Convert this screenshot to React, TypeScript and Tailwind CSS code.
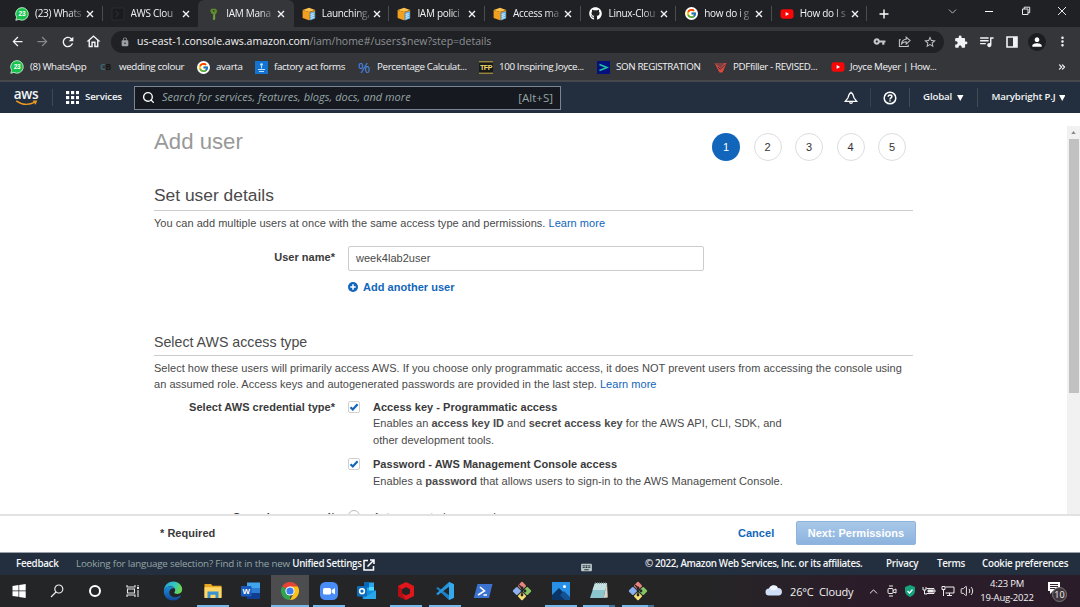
import React from "react";
import { FcGoogle } from "react-icons/fc";
import { FaGithub } from "react-icons/fa";
import {
  MdArrowBack, MdArrowForward, MdRefresh, MdOutlineHome, MdLock, MdVpnKey, MdStarBorder,
  MdExtension, MdQueueMusic, MdPerson, MdMoreVert, MdKeyboard,
} from "react-icons/md";
import { Search, ChevronUp, ChevronDown, Volume2, ChevronsRight } from "lucide-react";

const ui = "font-['Open_Sans','Noto_Sans',sans-serif]";

/* ---------- favicons ---------- */

const WhatsApp = () => (
  <svg viewBox="0 0 14 14" className="size-[14px] shrink-0">
    <path d="M7 .6a6.3 6.3 0 1 1-3.1 11.8L.8 13.3l.8-3A6.3 6.3 0 0 1 7 .6z" fill="#19c14e" stroke="#d9f5e0" strokeWidth=".8" />
    <text x="7" y="9.2" fontSize="6.5" fontWeight="700" textAnchor="middle" fill="#fff" fontFamily="Liberation Sans, sans-serif">23</text>
  </svg>
);

const Terminal = () => (
  <svg viewBox="0 0 14 14" className="size-[14px] shrink-0">
    <rect x="1" y="1" width="12" height="12" rx="1" fill="#1a1b1e" stroke="#2c2d31" />
    <path d="M4.5 4l3 3-3 3" stroke="#34373d" fill="none" />
  </svg>
);

const IamKey = () => (
  <svg viewBox="0 0 14 14" className="ml-[2px] size-[14px] shrink-0">
    <path d="M4.2 1.8h4.6L10.400 4 9.200 6.600l-1 .8V12l-1.3 1.2L5.600 12l.7-.9-.7-1 .6-.8V7.400l-1.700-.9L3.200 4z" fill="#5c8a2d" />
    <path d="M7.2 7.500V12l-.5 1" stroke="#91bc55" strokeWidth=".8" fill="none" />
    <circle cx="6.700" cy="3.800" r=".9" fill="#2c3a1f" />
  </svg>
);

const AwsCube = () => (
  <svg viewBox="0 0 14 14" className="size-[14px] shrink-0">
    <path d="M.6 3L7 .8 13.2 3 7 5z" fill="#ffc24a" />
    <path d="M.6 3L7 5v8.3L.6 11z" fill="#f2a01f" />
    <path d="M7 5l6.2-2v8L7 13.3z" fill="#d9820f" />
    <path d="M7.800 5.800l5.200-1.600v7.400l-5.200 2z" fill="#5aaee8" />
    <path d="M8.800 7.500l3-.9M8.800 9.400l3-.9M8.800 11.400l3-.9" stroke="#e8f6ff" strokeWidth="1" />
  </svg>
);

const YouTube = () => (
  <svg viewBox="0 0 14 10" className="h-[10px] w-[14px] shrink-0">
    <rect x=".5" y=".3" width="13" height="9.400" rx="2.400" fill="#f90606" />
    <path d="M5.600 3l3.500 2-3.500 2z" fill="#fff" />
  </svg>
);

const Google = () => (
  <span className="flex size-[13px] shrink-0 items-center justify-center rounded-full bg-white">
    <FcGoogle className="size-[11px]" />
  </span>
);
const GitHub = () => <FaGithub className="size-[13px] shrink-0 text-white" />;

/* ---------- browser chrome ---------- */

const tabs = [
  { icon: <WhatsApp />, title: "(23) Whats" },
  { icon: <Terminal />, title: "AWS Clou" },
  { icon: <IamKey />, title: "IAM Mana", active: true },
  { icon: <AwsCube />, title: "Launching," },
  { icon: <AwsCube />, title: "IAM polici" },
  { icon: <AwsCube />, title: "Access ma" },
  { icon: <GitHub />, title: "Linux-Clou" },
  { icon: <Google />, title: "how do i g" },
  { icon: <YouTube />, title: "How do I s" },
];

function TabStrip() {
  return (
    <div className="flex h-[27px] shrink-0 bg-[#202124] pl-[7px] text-[#f1f3f4]">
      {tabs.map((t, i) => (
        <div
          key={i}
          className={
            "flex h-[27px] w-[95.6px] shrink-0 items-center pl-2 " +
            (t.active ? "rounded-t-[6px] bg-[#35363a]" : "")
          }
        >
          <span className="flex w-[14px] justify-center">{t.icon}</span>
          <span className="ml-[6px] w-[48px] shrink-0 text-[10px] tracking-[-0.3px] whitespace-nowrap [mask-image:linear-gradient(to_right,#000_70%,#0005_92%)]">
            {t.title}
          </span>
          <svg viewBox="0 0 8 8" className="ml-[3px] size-[8px] shrink-0" fill="none" stroke="#f1f3f4" strokeWidth="1.400">
            <path d="M1 1l6 6M7 1L1 7" />
          </svg>
          {!t.active && i !== 1 && <span className="ml-auto h-[15px] w-px bg-[#4a4c50]" />}
        </div>
      ))}
      <div className="flex flex-1 items-center">
        <svg viewBox="0 0 10 10" className="ml-[12px] size-[10px] shrink-0" stroke="#fff" strokeWidth="1.400"><path d="M5 .5v9M.5 5h9" /></svg>
        <ChevronDown className="mb-1 ml-[57px] size-[13px] shrink-0 text-[#b5b7bb]" strokeWidth={1.800} />
        <span className="mb-1 ml-[26px] h-px w-[8px] shrink-0 bg-white" />
        <svg viewBox="0 0 10 10" className="mb-[5px] ml-[28px] size-[10px] shrink-0" fill="none" stroke="#e8eaed">
          <path d="M1.500 3h5.500v5.500H1.500zM3.200 3V1.200h5.500v5.500H7" />
        </svg>
        <svg viewBox="0 0 10 10" className="mb-[5px] ml-[26px] size-[10px] shrink-0" fill="none" stroke="#e8eaed">
          <path d="M1 1l8 8M9 1L1 9" />
        </svg>
      </div>
    </div>
  );
}

function Toolbar() {
  return (
    <div className="flex h-[28px] shrink-0 items-center bg-[#35363a] pt-px text-[#f1f3f4]">
      <MdArrowBack className="ml-[10px] size-[15px]" />
      <MdArrowForward className="ml-[10px] size-[15px] text-[#85878a]" />
      <MdRefresh className="ml-[10px] size-[16px]" />
      <MdOutlineHome className="ml-[9px] size-[17px]" />
      <div className="ml-[9px] flex h-[22px] w-[833px] shrink-0 items-center rounded-full bg-[#202124] text-[#c4c7ca]">
        <MdLock className="ml-[9px] size-[10px] text-[#9aa0a6]" />
        <span className="ml-[7px] flex-1 text-[10.5px] whitespace-nowrap text-[#8d9196]">
          <span className="text-[#f1f3f4]">us-east-1.console.aws.amazon.com</span>/iam/home#/users$new?step=details
        </span>
        <MdVpnKey className="size-[13px]" />
        <svg viewBox="0 0 14 14" className="ml-[12px] size-[13px]" fill="none" stroke="currentColor" strokeWidth="1.100">
          <path d="M3 5H1.500V12.500H11V10.500" />
          <path d="M3.800 9.500c.4-3 2-4.600 5-4.800V2.200L13 6 8.800 9.700V7.200C6.500 7.200 5 8 3.800 9.500z" />
        </svg>
        <MdStarBorder className="mr-[7px] ml-[12px] size-[14px]" />
      </div>
      <MdExtension className="ml-[10px] size-[14px]" />
      <MdQueueMusic className="ml-[10px] size-[17px]" />
      <svg viewBox="0 0 12 12" className="ml-[11px] size-[12px]">
        <path d="M1 1h10v10H1z" fill="none" stroke="#f1f3f4" strokeWidth="1.600" />
        <path d="M7 1h4v10H7z" fill="#f1f3f4" />
      </svg>
      <span className="ml-[10px] flex size-[18px] items-center justify-center rounded-full bg-[#1c1d20]">
        <MdPerson className="size-[14px] text-white" />
      </span>
      <MdMoreVert className="ml-[9px] size-[15px]" />
    </div>
  );
}

const Bm = ({ w, icon, gap, children }: { w: string; icon: React.ReactNode; gap: string; children: React.ReactNode }) => (
  <div className={"flex shrink-0 items-center whitespace-nowrap " + w + " " + gap}>
    {icon}
    <span>{children}</span>
  </div>
);

function Bookmarks() {
  return (
    <div className="flex h-[27px] shrink-0 items-center border-b-2 border-[#46484c] bg-[#35363a] pb-px pl-[10px] text-[9.800px] tracking-[-0.370px] text-[#f1f3f4]">
      <Bm w="w-[90px]" gap="gap-[6px]" icon={<WhatsApp />}>(8) WhatsApp</Bm>
      <Bm w="w-[97px]" gap="gap-[6px]" icon={<span className="w-[13px] text-[9px] font-bold tracking-[-0.500px] text-[#161616]"><span className="text-[#3c6a78]">C</span>B</span>}>wedding colour</Bm>
      <Bm w="w-[58px]" gap="gap-[6px]" icon={<Google />}>avarta</Bm>
      <Bm w="w-[103px]" gap="gap-[6px]" icon={
        <svg viewBox="0 0 13 13" className="size-[13px]"><rect width="13" height="13" fill="#1273d0" /><circle cx="6.500" cy="3.500" r="1.300" fill="#cfe6ff" /><path d="M6.500 4.500v3M3 8.500h7M4 10.500h5" stroke="#bfe0ff" fill="none" /></svg>
      }>factory act forms</Bm>
      <Bm w="w-[121px]" gap="gap-[6px]" icon={<span className="w-[13px] text-[15px] leading-none text-[#4a8ae8]">%</span>}>Percentage Calculat...</Bm>
      <Bm w="w-[118px]" gap="gap-[6px]" icon={
        <svg viewBox="0 0 14 13" className="h-[13px] w-[14px]"><rect width="14" height="13" fill="#18191a" /><path d="M0 .8h14M0 12.200h14" stroke="#d2b64c" /><text x="7" y="9.200" fontSize="7" fontWeight="700" textAnchor="middle" fill="#f4dc6a" fontFamily="Liberation Sans, sans-serif">TFP</text></svg>
      }>100 Inspiring Joyce...</Bm>
      <Bm w="w-[117px]" gap="gap-[6px]" icon={
        <svg viewBox="0 0 13 13" className="size-[13px]"><rect width="13" height="13" fill="#04107e" /><path d="M2.500 3.500l7.500 3-7.500 3" stroke="#23c4a4" strokeWidth="1.500" fill="none" /></svg>
      }>SON REGISTRATION</Bm>
      <Bm w="w-[117px]" gap="gap-[6px]" icon={
        <svg viewBox="0 0 13 13" className="size-[13px]"><path d="M.5 2h12L8.500 11.500h-3z" fill="#e0483e" /><path d="M.5 2h10L6.500 7z" fill="#7b4143" /><path d="M4 6l2.300 2.500L11 3.500" stroke="#333" fill="none" /></svg>
      }>PDFfiller - REVISED...</Bm>
      <Bm w="w-[226px]" gap="gap-[5px]" icon={<YouTube />}>Joyce Meyer | How...</Bm>
      <ChevronsRight className="size-[10px]" strokeWidth={3} />
    </div>
  );
}

/* ---------- console ---------- */

const Caret = () => <svg viewBox="0 0 6 5" className="h-[6px] w-[6.500px] shrink-0" fill="#fff" preserveAspectRatio="none"><path d="M0 0h6L3 5z" /></svg>;

function ConsoleNav() {
  return (
    <div className="flex h-[31px] shrink-0 items-center bg-[#232f3e] text-[9.700px] font-semibold tracking-[-0.150px] text-[#f4f5f6]">
      <div className="ml-[13px] flex w-[40px] shrink-0 flex-col items-center border-r border-[#3d4857] pr-[13px]">
        <span className="h-[11px] text-[13.500px] leading-[10px] font-semibold tracking-[-0.300px]">aws</span>
        <svg viewBox="0 0 26 7" className="h-[6px] w-[25px]" fill="none" stroke="#f29a1f" strokeWidth="1.500">
          <path d="M1 1c7 5 15 5 22 1.500M20.500 1.200l4 .2-1.500 3.600" />
        </svg>
      </div>
      <svg viewBox="0 0 13 13" className="ml-[13px] size-[13px] shrink-0" fill="#fff">
        {[0, 5, 10].map((y) => [0, 5, 10].map((x) => <rect key={x + "-" + y} x={x} y={y} width="3.200" height="3.200" />))}
      </svg>
      <span className="ml-[6px] w-[49px] shrink-0">Services</span>
      <div className="flex h-[24px] w-[427px] shrink-0 items-center border border-[#7b8693] bg-[#16191f] px-[7px] text-[11px] font-normal tracking-[0.020px] text-[#95a5a6]">
        <Search className="size-[13px] text-white" strokeWidth={2.500} />
        <span className="ml-[7px] flex-1 italic">Search for services, features, blogs, docs, and more</span>
        <span className="text-[11.500px]">[Alt+S]</span>
      </div>
      <svg viewBox="0 0 14 14" className="ml-[283px] size-[14px] shrink-0" fill="none" stroke="#fff" strokeWidth="1.300">
        <path d="M1.300 10.300h11.400L10 6.800 9 3.800C8.600 2.600 7.800 2 7 2s-1.600.6-2 1.800L4 6.800zM5.500 11.300a1.600 1.600 0 0 0 3 0M7 .8V2" />
      </svg>
      <span className="ml-[12px] h-[19px] w-px bg-[#35414f]" />
      <svg viewBox="0 0 14 14" className="ml-[12px] size-[14px] shrink-0" fill="none" stroke="#fff" strokeWidth="1.500">
        <circle cx="7" cy="7" r="5.800" />
        <path d="M5.200 5.700c0-2.400 3.700-2.300 3.700-.1C8.900 7 7 6.900 7 8.400M7 9.300v1.300" />
      </svg>
      <span className="ml-[12px] h-[19px] w-px bg-[#414c5a]" />
      <span className="ml-[13px] w-[34px] shrink-0">Global</span>
      <Caret />
      <span className="ml-[13px] h-[19px] w-px bg-[#414c5a]" />
      <span className="ml-[14px] w-[67px] shrink-0 whitespace-nowrap">Marybright P.J</span>
      <Caret />
    </div>
  );
}

const Check = () => (
  <span className="mt-[2px] flex size-[12px] shrink-0 items-center justify-center rounded-[2px] border border-[#d0d0d0] bg-white">
    <svg viewBox="0 0 10 10" className="size-[10px]" fill="none" stroke="#1166bb" strokeWidth="2.200"><path d="M1.500 5.200l2.300 2.300L8.600 2.200" /></svg>
  </span>
);

const Field = ({ label, children, className = "" }: { label: string; children: React.ReactNode; className?: string }) => (
  <div className={"flex " + className}>
    <div className="w-[181px] shrink-0 text-right font-bold text-[#3a3a3a]">{label}</div>
    <div className="ml-[13px]">{children}</div>
  </div>
);

function Content() {
  return (
    <main className="flex h-[401px] shrink-0 bg-white font-['Liberation_Sans',Arial,sans-serif] text-[11px] leading-[16.500px] tracking-[0.030px] text-[#4a4a4a]">
      <div className="ml-[154px] h-[401px] w-[759px] shrink-0 overflow-hidden">
        <div className="flex h-[61px] justify-between pt-[13px]">
          <h1 className="pt-[3px] text-[22.200px] leading-[26px] tracking-normal text-[#999]">Add user</h1>
          <div className="mt-[7px] mr-[7px] flex gap-[13.500px]">
            {[1, 2, 3, 4, 5].map((n) => (
              <span key={n} className={"flex size-[28px] items-center justify-center rounded-full pt-px " + (n === 1 ? "bg-[#1166bb] text-white" : "border border-[#ddd] text-[#333]")}>{n}</span>
            ))}
          </div>
        </div>
        <h2 className="h-[37px] border-b border-[#ccc] pt-[10px] text-[17.400px] leading-[22px] tracking-normal">Set user details</h2>
        <p className="mt-[4px]">You can add multiple users at once with the same access type and permissions. <a className="text-[#1166bb]">Learn more</a></p>
        <Field label="User name*" className="mt-[14px] leading-[22px]">
          <div className="flex h-[25px] w-[356px] items-center rounded-[2px] border border-[#ccc] px-[7px]">week4lab2user</div>
          <div className="mt-[5px] flex items-center font-bold text-[#1166bb]">
            <svg viewBox="0 0 11 11" className="mr-[5px] size-[10px]"><circle cx="5.500" cy="5.500" r="5.500" fill="#1166bb" /><path d="M5.500 2.500v6M2.500 5.500h6" stroke="#fff" strokeWidth="1.700" /></svg>
            Add another user
          </div>
        </Field>
        <h3 className="mt-[33px] h-[25px] border-b border-[#ccc] text-[14.200px] leading-[22px] tracking-normal">Select AWS access type</h3>
        <p className="mt-[4px] whitespace-nowrap">
          Select how these users will primarily access AWS. If you choose only programmatic access, it does NOT prevent users from accessing the console using<br />
          an assumed role. Access keys and autogenerated passwords are provided in the last step. <a className="text-[#1166bb]">Learn more</a>
        </p>
        <Field label="Select AWS credential type*" className="mt-[6px]">
          <div className="flex gap-[13px]">
            <Check />
            <div><b className="text-[#3a3a3a]">Access key - Programmatic access</b><br />Enables an <b>access key ID</b> and <b>secret access key</b> for the AWS API, CLI, SDK, and<br />other development tools.</div>
          </div>
          <div className="mt-[8px] flex gap-[13px]">
            <Check />
            <div><b className="text-[#3a3a3a]">Password - AWS Management Console access</b><br />Enables a <b>password</b> that allows users to sign-in to the AWS Management Console.</div>
          </div>
        </Field>
        <Field label="Console password*" className="mt-[20px]">
          <div className="flex gap-[13px]">
            <span className="mt-[1px] size-[12px] rounded-full border border-[#bbb]" />
            <span>Autogenerated password</span>
          </div>
        </Field>
      </div>
      <div className="mt-[13px] ml-auto flex w-[13px] flex-col items-center bg-[#f1f1f1]">
        <svg viewBox="0 0 6 4" className="mt-[5px] h-[3px] w-[5px]" fill="#8a8a8a"><path d="M0 4h6L3 0z" /></svg>
        <span className="mt-[5px] h-[254px] w-[10px] bg-[#c1c1c1]" />
      </div>
    </main>
  );
}

function ActionBar() {
  return (
    <div className="flex h-[38px] shrink-0 items-center border-t-2 border-[#e2e2e2] bg-white pb-[2px] font-['Liberation_Sans',Arial,sans-serif] text-[11px] font-bold tracking-[0.030px] text-[#3a3a3a]">
      <span className="ml-[160px] w-[578px]">* Required</span>
      <span className="w-[58px] text-[#1166bb]">Cancel</span>
      <button className="h-[24px] w-[120px] rounded-[2px] border border-[#8fb4dc] bg-linear-to-b from-[#a9c8e8] to-[#8cb3de] text-white">Next: Permissions</button>
    </div>
  );
}

function ConsoleFooter() {
  return (
    <div className="flex h-[23px] shrink-0 items-center border-t border-[#9aa1a9] bg-[#232f3e] pt-px pl-[16px] text-[9.800px] font-semibold tracking-[-0.150px] whitespace-nowrap text-[#f4f5f6]">
      <span className="w-[60px] tracking-[-0.300px]">Feedback</span>
      <span className="w-[287px] font-normal tracking-[-0.200px] text-[#95a5a6]">Looking for language selection? Find it in the new <b className="font-semibold tracking-[-0.340px] text-[#f4f5f6]">Unified Settings</b></span>
      <svg viewBox="0 0 12 12" className="size-[12px] shrink-0" fill="none" stroke="#fff" strokeWidth="1.500"><path d="M5 1.500H1v9.500h9.500V7M7 1h4v4M11 1L4.500 7.500" /></svg>
      <MdKeyboard className="mt-[5px] ml-[205px] size-[13px] shrink-0 text-[#bac6c6]" />
      <span className="ml-[52px] w-[241px] shrink-0 tracking-[-0.360px]">© 2022, Amazon Web Services, Inc. or its affiliates.</span>
      <span className="w-[51px] shrink-0 tracking-[-0.250px]">Privacy</span>
      <span className="w-[45px] shrink-0 tracking-[-0.300px]">Terms</span>
      <span className="tracking-[-0.280px]">Cookie preferences</span>
    </div>
  );
}

/* ---------- taskbar ---------- */

const svg = "size-[20px]";
const Word = () => (
  <svg viewBox="0 0 20 20" className={svg}>
    <path d="M6 1.500h13v6H6z" fill="#41a5ee" /><path d="M6 7h13v5H6z" fill="#2b7cd3" /><path d="M6 12h13v6H6z" fill="#103f91" />
    <rect x="0" y="5" width="10.500" height="10.500" rx="1" fill="#185abd" />
    <text x="5.200" y="13" fontSize="8" fontWeight="700" textAnchor="middle" fill="#fff" fontFamily="Liberation Sans, sans-serif">W</text>
  </svg>
);
const Outlook = () => (
  <svg viewBox="0 0 20 20" className={svg}>
    <path d="M7 1.500h10v9H7z" fill="#28a8ea" /><path d="M7 1.500h5v5H7z" fill="#0364b8" /><path d="M12 6h5v5h-5z" fill="#50d9ff" />
    <path d="M4.500 9.500l14.500 0V18H6z" fill="#1490df" /><path d="M19 9.500L5 18h14z" fill="#28a8ea" />
    <rect x="0" y="5" width="10" height="10.500" rx="1" fill="#0f6cbd" />
    <circle cx="5" cy="10.200" r="2.400" fill="none" stroke="#fff" strokeWidth="1.500" />
  </svg>
);
const GitBash = () => (
  <svg viewBox="0 0 20 20" className={svg}>
    <g transform="rotate(45 10 10)">
      <rect x="3.200" y="3.200" width="6.300" height="6.300" rx="1" fill="#e8837d" /><rect x="10.500" y="3.200" width="6.300" height="6.300" rx="1" fill="#86c566" />
      <rect x="3.200" y="10.500" width="6.300" height="6.300" rx="1" fill="#8bb2ef" /><rect x="10.500" y="10.500" width="6.300" height="6.300" rx="1" fill="#f5df75" />
    </g>
    <path d="M7 4l6 6M10 7v7" stroke="#262626" strokeWidth="1.300" /><circle cx="10" cy="7" r="1.400" fill="#262626" /><circle cx="10" cy="14" r="1.400" fill="#262626" /><circle cx="13" cy="10" r="1.400" fill="#262626" />
  </svg>
);

const apps: { icon: React.ReactNode; open?: boolean; active?: boolean; multi?: boolean }[] = [
  { icon: <svg viewBox="0 0 20 20" className={svg} fill="#fff"><path d="M3.500 5l6-.9v5.500h-6zM10.200 4l6.500-1v6.600h-6.500zM3.500 10.300h6v5.500l-6-.9zM10.200 10.300h6.500v6.600l-6.500-1z" /></svg> },
  { icon: <svg viewBox="0 0 14 14" className="mr-[2px] size-[14px]" fill="none" stroke="#ececec" strokeWidth="1.200"><circle cx="8.800" cy="5" r="4" /><path d="M6 8L1 13" /></svg> },
  { icon: <span className="mr-[3px] size-[12px] rounded-full border-2 border-white" /> },
  { icon: <svg viewBox="0 0 14 14" className="mr-[5px] size-[14px]" fill="none" stroke="#e8e8e8" strokeWidth="1.100"><path d="M1 1v2h8V1M1 13v-2h8v2M1.500 5h7v4h-7zM12 1v1.500M12 6v7" /><path d="M11 4h2" strokeWidth="2" /></svg> },
  { icon: (
    <svg viewBox="0 0 20 20" className={"mr-px " + svg}>
      <defs>
        <linearGradient id="eg" x1="0" y1="0" x2="1" y2=".3"><stop offset="0" stopColor="#249fdf" /><stop offset=".6" stopColor="#35c5c0" /><stop offset="1" stopColor="#69d556" /></linearGradient>
        <linearGradient id="eb" x1="0" y1="0" x2="0" y2="1"><stop offset="0" stopColor="#1c8fda" /><stop offset="1" stopColor="#114a9c" /></linearGradient>
      </defs>
      <path d="M.8 10C1.200 3.500 6 .6 10.200 .6c5.500 0 9 4 9 7.700 0 3-2.200 4.600-4.800 4.600-2.200 0-3.200-.7-3.200-1.300s1-1 1-2.600C12.200 7 10 5.200 7.300 5.200 4 5.200 1.500 7.400.8 10z" fill="url(#eg)" />
      <path d="M.8 10c.8-3 3.200-4.500 6.200-4.500 2 0 3.500.7 4.300 1.700-3.300-.5-5 1.700-5 4.200 0 3 2.800 4.800 6 4.800 2.500 0 4.200-1 5-1.600.6-.3.9.1.5.6C16 18 13.300 19.500 10.300 19.500 4.600 19.500.500 15.300.8 10z" fill="url(#eb)" />
    </svg>) },
  { open: true, icon: <svg viewBox="0 0 20 20" className={svg}><path d="M1.500 3h6.500l1.500 1.800h9V16h-17z" fill="#e8a623" /><path d="M1.500 6.200h17V17h-17z" fill="#ffd766" /><path d="M4.500 10.500h11V17h-3v-3.200h-5V17h-3z" fill="#3a93ce" /></svg> },
  { icon: <Word /> },
  { open: true, active: true, icon: (
    <svg viewBox="0 0 20 20" className={svg}>
      <path d="M10 10L2.200 5.500A9 9 0 0 1 17.800 5.500z" fill="#e54335" /><path d="M10 10v9A9 9 0 0 1 2.200 5.500z" fill="#32a350" />
      <path d="M10 5.500h7.800A9 9 0 0 1 10 19l3.900-6.800z" fill="#fbc116" />
      <circle cx="10" cy="10" r="4.600" fill="#fff" /><circle cx="10" cy="10" r="3.600" fill="#3a7df0" />
    </svg>) },
  { open: true, icon: <svg viewBox="0 0 20 20" className={svg}><rect x="1" y="1" width="18" height="18" rx="5.500" fill="#4a8cf7" /><rect x="4" y="7" width="8" height="6.500" rx="1.500" fill="#fff" /><path d="M12.700 9l3.300-2v6.500l-3.300-2z" fill="#fff" /></svg> },
  { icon: <Outlook /> },
  { open: true, icon: <svg viewBox="0 0 20 20" className={svg}><path d="M10 1l8 4v10l-8 4-8-4V5z" fill="#e0161d" /><path d="M2 5l4 3.200v4L10 19l-8-4z" fill="#b60c14" /><path d="M10 6l4 2.200v4L10 14.500l-4-2.300v-4z" fill="#242424" /></svg> },
  { open: true, icon: <svg viewBox="0 0 20 20" className={svg}><path d="M14 1l5 2.300v13.400L14 19 1.200 7.200l1.500-1.300L14 14.300z" fill="#1b80c8" /><path d="M14 1v4.700L2.700 14.200 1.200 12.800z" fill="#2496de" /><path d="M14 1l5 2.300v13.400L14 19z" fill="#36a9ed" /></svg> },
  { icon: <svg viewBox="0 0 20 20" className={svg}><path d="M4.500 3h15l-3.500 14H.8z" fill="#3c72cf" /><path d="M7 6l4.500 4L5 14M10.500 14H14" stroke="#fff" strokeWidth="1.600" fill="none" /></svg> },
  { icon: <GitBash /> },
  { open: true, icon: <svg viewBox="0 0 20 20" className={svg}><path d="M1 1h18v18H1z" fill="#2790e6" /><path d="M1 14l7-7 11 11v1H1z" fill="#0b3567" /><path d="M9 14l4-4 6 6v3h-5z" fill="#155294" /><circle cx="13.500" cy="5.500" r="1.500" fill="#fff" /></svg> },
  { open: true, multi: true, icon: <svg viewBox="0 0 20 20" className={svg}><path d="M6 2h12l-3.500 15H1z" fill="#8dc5ce" /><path d="M6 2h12l-1.700 7H3.500z" fill="#c4e1e2" /><path d="M18 2l.8 14.500-4.300.5z" fill="#d9d6cb" /><path d="M6 2h12" stroke="#6f7f80" strokeWidth="1.500" strokeDasharray="1 1" /></svg> },
  { open: true, multi: true, icon: <GitBash /> },
];

function Taskbar() {
  return (
    <div className="flex h-[32px] shrink-0 bg-linear-to-r from-[#242527] via-[#252526] via-65% to-[#2b1c29] to-80% text-[#f2f2f2]">
      {apps.map((a, i) => (
        <div key={i} className={"flex h-[32px] w-[38.660px] shrink-0 flex-col items-center " + (a.active ? "bg-[#4d4d4f]" : "")}>
          <span className="flex h-[30px] items-center justify-center pt-[2px]">{a.icon}</span>
          {a.open && <span className={"h-[2px] bg-[#76b9ed] " + (a.active ? "w-[38.660px]" : a.multi ? "w-[32px] border-r-[6px] border-[#467297]" : "w-[32px]")} />}
        </div>
      ))}
      <div className="ml-auto flex w-[315px] shrink-0 items-center">
        <svg viewBox="0 0 18 12" className="mb-[2px] h-[12px] w-[18px]"><path d="M4 11.500a3.500 3.500 0 0 1 0-7A5 5 0 0 1 13 4a3.800 3.800 0 0 1 1 7.500z" fill="#cfdff7" /><path d="M4 4.500A5 5 0 0 1 12.500 3c0 3-3 5-8.500 1.500z" fill="#eef4ff" /></svg>
        <span className="ml-[7px] w-[77px] pt-[2px] text-[11px] tracking-[-0.150px] whitespace-pre">26°C  Cloudy</span>
        <ChevronUp className="size-[13px] shrink-0" strokeWidth={1.800} />
        <svg viewBox="0 0 12 12" className="ml-[6px] size-[12px] shrink-0" fill="none" stroke="#eee"><rect x="2" y="3.500" width="5" height="5" rx="1" /><path d="M7 5.500l3-1.500v4L7 7M3 1h4M3 11h4" /></svg>
        <svg viewBox="0 0 12 12" className="ml-[6px] size-[12px] shrink-0"><path d="M6 0l5 2v4c0 3-2.500 5-5 6-2.500-1-5-3-5-6V2z" fill="#15a37c" /><path d="M3.500 6l2 2 3-3.500" fill="none" stroke="#fff" strokeWidth="1.200" /></svg>
        <svg viewBox="0 0 14 12" className="ml-[6px] h-[12px] w-[14px] shrink-0" fill="none" stroke="#eee"><path d="M4.500 3.500H12v5H4.500M13 5v2M1 2v3h3V2M2.500 5v4H5" /><path d="M6 5h5v2H6z" fill="#eee" /></svg>
        <svg viewBox="0 0 14 12" className="ml-[5px] h-[12px] w-[14px] shrink-0" fill="none" stroke="#eee"><path d="M4.500 2H13v6H4.500M8.500 8v2.500M6 10.500h5M1 1.500h3v3H1zM2.500 4.500V11" /></svg>
        <Volume2 className="ml-[5px] size-[14px] shrink-0" strokeWidth={1.600} />
        <div className="ml-[5px] w-[56px] shrink-0 text-center text-[9.500px] leading-[14px] tracking-[-0.200px] whitespace-nowrap">4:23 PM<br />19-Aug-2022</div>
        <div className="relative ml-[12px] h-[20px] w-[22px] shrink-0">
          <svg viewBox="0 0 14 14" className="size-[14px]"><path d="M1 1h12v9H6l-3 3v-3H1z" fill="#fff" /><path d="M3 3.500h8M3 5.500h8M3 7.500h5" stroke="#33232f" /></svg>
          <span className="absolute top-[6px] left-[5px] flex size-[15px] items-center justify-center rounded-full border border-[#777] bg-[#41353d] text-[9px]">10</span>
        </div>
      </div>
    </div>
  );
}

export default function App() {
  return (
    <div className={"flex h-[607px] w-[1080px] flex-col overflow-hidden bg-white " + ui}>
      <TabStrip />
      <Toolbar />
      <Bookmarks />
      <ConsoleNav />
      <Content />
      <ActionBar />
      <ConsoleFooter />
      <Taskbar />
    </div>
  );
}
